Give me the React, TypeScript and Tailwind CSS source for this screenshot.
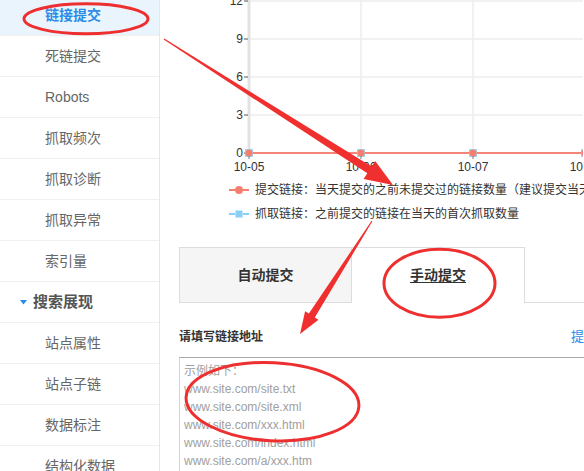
import React from 'react';

const FONT = '"Liberation Sans", "Noto Sans CJK SC", sans-serif';

interface NavItem {
  label: string;
  active?: boolean;
  group?: boolean;
}

const NAV: NavItem[] = [
  { label: '链接提交', active: true },
  { label: '死链提交' },
  { label: 'Robots' },
  { label: '抓取频次' },
  { label: '抓取诊断' },
  { label: '抓取异常' },
  { label: '索引量' },
  { label: '搜索展现', group: true },
  { label: '站点属性' },
  { label: '站点子链' },
  { label: '数据标注' },
  { label: '结构化数据' },
];

const X_TICKS = [
  { x: 250, label: '10-05' },
  { x: 362, label: '10-06' },
  { x: 474, label: '10-07' },
  { x: 586, label: '10-08' },
];

const Y_TICKS = [
  { y: 1, label: '12' },
  { y: 39, label: '9' },
  { y: 77, label: '6' },
  { y: 115, label: '3' },
  { y: 153, label: '0' },
];

const PLACEHOLDER = [
  '示例如下：',
  'www.site.com/site.txt',
  'www.site.com/site.xml',
  'www.site.com/xxx.html',
  'www.site.com/index.html',
  'www.site.com/a/xxx.htm',
  'www.site.com/a/xxx.php',
].join('\n');

function Sidebar() {
  return (
    <div className="w-[160px] shrink-0 border-r border-[#e6e6e6] bg-white">
      {NAV.map((item) => (
        <div
          key={item.label}
          className={
            'flex h-[41px] items-center border-b border-[#f0f0f0] ' +
            (item.active ? 'bg-[#eaf4fd] ' : '') +
            (item.group ? 'pl-[20px]' : 'pl-[45px]')
          }
        >
          {item.group && (
            <svg width="7" height="5" viewBox="0 0 7 5" className="mr-[6px]">
              <polygon points="0,0 7,0 3.5,4.5" fill="#2a8ce6" />
            </svg>
          )}
          <span
            className={
              item.active
                ? 'text-[14px] font-bold text-[#2a8ce6]'
                : item.group
                  ? 'text-[15px] font-bold text-[#555]'
                  : 'text-[14px] text-[#666]'
            }
          >
            {item.label}
          </span>
        </div>
      ))}
    </div>
  );
}

function Chart() {
  return (
    <svg width="423" height="180" viewBox="161 -5 423 180" className="block">
      {/* grid */}
      {Y_TICKS.slice(0, 4).map((t) => (
        <line key={t.y} x1="250" x2="600" y1={t.y} y2={t.y} stroke="#ececec" strokeWidth="1.5" />
      ))}
      {X_TICKS.slice(1).map((t) => (
        <line key={t.x} x1={t.x} x2={t.x} y1="-5" y2="153" stroke="#ececec" strokeWidth="1.5" />
      ))}
      <line x1="250" x2="250" y1="-5" y2="154" stroke="#e2e2e2" strokeWidth="3" />

      {/* y axis labels */}
      {Y_TICKS.map((t) => (
        <g key={t.label}>
          <line x1="245" x2="249" y1={t.y} y2={t.y} stroke="#555" strokeWidth="1" />
          <text x="244" y={t.y + 4} textAnchor="end" fontSize="12" fill="#333" fontFamily={FONT}>
            {t.label}
          </text>
        </g>
      ))}

      {/* series */}
      <line x1="250" x2="600" y1="153" y2="153" stroke="#f5857a" strokeWidth="2" />
      {X_TICKS.map((t) => (
        <g key={t.label}>
          <rect x={t.x - 4} y="149" width="8" height="8" fill="#9fd6f5" />
          <circle cx={t.x} cy="153" r="3.6" fill="#f67e6d" />
          <line x1={t.x} x2={t.x} y1="156" y2="159" stroke="#777" strokeWidth="1" />
          <text x={t.x} y="171" textAnchor="middle" fontSize="12" fill="#333" fontFamily={FONT}>
            {t.label}
          </text>
        </g>
      ))}
    </svg>
  );
}

function Legend() {
  return (
    <div className="pl-[69px] pt-[3px] text-[12px] text-[#333]">
      <div className="flex h-6 items-center whitespace-nowrap">
        <svg width="22" height="10" viewBox="0 0 22 10" className="mr-[4px] shrink-0">
          <line x1="0" x2="6" y1="5" y2="5" stroke="#f67e6d" strokeWidth="2" />
          <line x1="14" x2="20" y1="5" y2="5" stroke="#f67e6d" strokeWidth="2" />
          <circle cx="10" cy="5" r="4" fill="#f67e6d" />
        </svg>
        提交链接：当天提交的之前未提交过的链接数量（建议提交当天产生的新链接）
      </div>
      <div className="flex h-6 items-center whitespace-nowrap">
        <svg width="22" height="10" viewBox="0 0 22 10" className="mr-[4px] shrink-0">
          <line x1="0" x2="6" y1="5" y2="5" stroke="#87cefa" strokeWidth="2" />
          <line x1="14" x2="20" y1="5" y2="5" stroke="#87cefa" strokeWidth="2" />
          <rect x="6.5" y="1.5" width="7" height="7" fill="#87cefa" />
        </svg>
        抓取链接：之前提交的链接在当天的首次抓取数量
      </div>
    </div>
  );
}

function SubmitForm() {
  return (
    <div className="w-[560px] pl-[19px]">
      {/* tabs */}
      <div className="mt-[21px] flex h-[56px]">
        <div className="flex w-[173px] items-center justify-center border border-[#ddd] bg-[#f5f5f5] text-[14px] font-bold text-[#333]">
          自动提交
        </div>
        <div className="flex w-[173px] items-center justify-center border-t border-r border-[#ddd] bg-white text-[14px] font-bold text-[#333] underline underline-offset-2">
          手动提交
        </div>
        <div className="flex-1 border-b border-[#ddd]" />
      </div>

      {/* field label */}
      <div className="mt-[24px] flex h-[20px] items-center">
        <div className="w-[392px] text-[12px] font-bold text-[#333]">请填写链接地址</div>
        <a className="whitespace-nowrap text-[13px] text-[#2a8ce6]">提交格式说明</a>
      </div>

      <textarea
        className="mt-[10px] block h-[200px] w-full resize-none border border-[#d4d4d4] border-t-[#a9a9a9] pt-[4px] pl-[4px] text-[12px] leading-[18px] text-[#333] outline-none placeholder:text-[#a0a0a0]"
        style={{ fontFamily: FONT }}
        placeholder={PLACEHOLDER}
      />
    </div>
  );
}

function Annotations() {
  return (
    <svg
      width="584"
      height="471"
      viewBox="0 0 584 471"
      className="pointer-events-none absolute top-0 left-0"
    >
      <g fill="none" stroke="#ee2f2f" strokeWidth="3">
        <ellipse cx="86" cy="18.8" rx="62" ry="15" />
        <ellipse cx="439.5" cy="283.3" rx="55.5" ry="34" />
        <ellipse cx="272.5" cy="401.7" rx="86.5" ry="39" transform="rotate(3 272.5 401.7)" />
      </g>
      <g fill="#f0302f">
        <polygon points="163.7,39.5 367.3,173.3 363.6,179 393,185 375.2,161 371.6,166.6 164.3,38.5" />
        <polygon points="372.4,221.3 314.8,317.4 318.5,319.8 300,334 305.1,311.2 308.9,313.6 371.6,220.7" />
      </g>
    </svg>
  );
}

export default function App() {
  return (
    <div className="relative h-[471px] w-[584px] overflow-hidden bg-white" style={{ fontFamily: FONT }}>
      <div className="-mt-[5px] flex">
        <Sidebar />
        <div className="min-w-0 flex-1">
          <div className="w-[700px]">
            <Chart />
            <Legend />
            <SubmitForm />
          </div>
        </div>
      </div>
      <Annotations />
    </div>
  );
}
